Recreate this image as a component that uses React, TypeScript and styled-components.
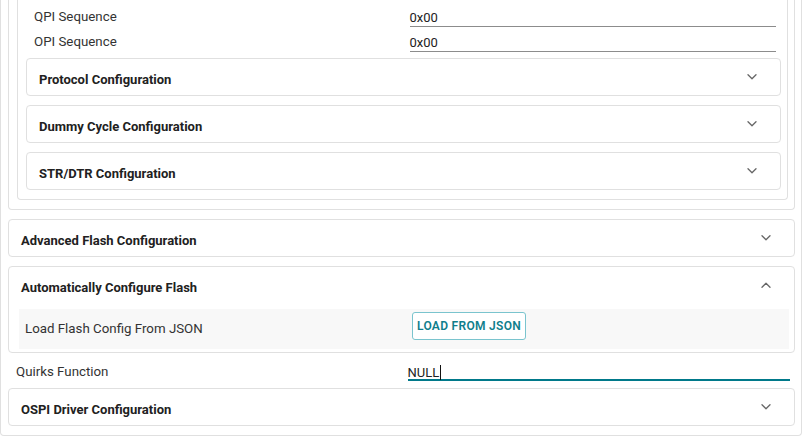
import React from "react";
import styled, { createGlobalStyle } from "styled-components";

const GlobalStyle = createGlobalStyle`
  *, *::before, *::after { box-sizing: border-box; }
  html, body { margin: 0; padding: 0; background: #ffffff; }
  body {
    width: 803px;
    height: 436px;
    overflow: hidden;
    font-family: Roboto, "Liberation Sans", Arial, sans-serif;
    color: #212121;
  }
`;

const BORDER = "#e0e0e0";

const Outer = styled.div`
  display: flex;
  flex-direction: column;
  width: 802px;
  border: 1px solid ${BORDER};
  border-top: none;
  border-radius: 0 0 4px 4px;
  padding: 0 6px 9px 7px;
`;

const Panel = styled.div<{ $padTop?: number }>`
  display: flex;
  flex-direction: column;
  border: 1px solid ${BORDER};
  border-top: none;
  border-radius: 0 0 4px 4px;
  padding: ${(p) => p.$padTop ?? 0}px 6px 9px 8px;
`;

const Card = styled.div<{ $top?: number }>`
  display: flex;
  flex-direction: column;
  margin-top: ${(p) => (p.$top ?? 9)}px;
  border: 1px solid ${BORDER};
  border-radius: 4px;
  background: #ffffff;
`;

const Header = styled.div`
  display: flex;
  align-items: center;
  justify-content: space-between;
  height: 36px;
  padding: 0 18px 0 12px;
`;

const Title = styled.span`
  margin-top: 6px;
  font-size: 13px;
  font-weight: 700;
  color: #212121;
  line-height: 16px;
`;

const IconBox = styled.span`
  display: flex;
  align-items: center;
  justify-content: center;
  width: 20px;
  height: 20px;
`;

const Body = styled.div`
  padding: 6px 5px 3px 10px;
`;

const FieldRow = styled.div<{ $height: number; $shaded?: boolean }>`
  display: grid;
  grid-template-columns: 1fr 1fr;
  align-items: center;
  height: ${(p) => p.$height}px;
  background: ${(p) => (p.$shaded ? "#f8f8f8" : "transparent")};
`;

const Label = styled.span<{ $pad?: number; $drop?: number }>`
  padding-left: ${(p) => p.$pad ?? 8}px;
  margin-top: ${(p) => p.$drop ?? 0}px;
  font-size: 13.3px;
  color: #333333;
  line-height: 16px;
`;

const Input = styled.div<{ $focused?: boolean }>`
  display: flex;
  align-items: center;
  height: 20px;
  margin: 0 5px 0 6px;
  padding-top: ${(p) => (p.$focused ? 5 : 2)}px;
  font-size: 13px;
  color: #222222;
  border-bottom: ${(p) => (p.$focused ? "2px solid #00798a" : "1px solid #8c8c8c")};
`;

const Caret = styled.span`
  display: inline-block;
  width: 1px;
  height: 15px;
  margin-left: 1px;
  background: #111111;
`;

const ButtonCell = styled.div`
  align-self: start;
  margin-top: 3px;
  padding-left: 8px;
`;

const OutlineButton = styled.button`
  height: 28px;
  padding: 0 4px;
  border: 1px solid #7ac4ce;
  border-radius: 3px;
  background: #ffffff;
  font-family: Roboto, "Liberation Sans", Arial, sans-serif;
  font-size: 12px;
  font-weight: 600;
  letter-spacing: 0.3px;
  color: #0f7e8c;
  cursor: pointer;
`;

const Chevron = ({ up }: { up?: boolean }) => (
  <svg width="10" height="6" viewBox="0 0 10 6" fill="none">
    <polyline
      points={up ? "1,5.2 5,1.2 9,5.2" : "1,0.8 5,4.8 9,0.8"}
      stroke="#666666"
      strokeWidth="1.3"
      strokeLinecap="round"
      strokeLinejoin="round"
    />
  </svg>
);

const Section = ({ title, up }: { title: string; up?: boolean }) => (
  <Header>
    <Title>{title}</Title>
    <IconBox>
      <Chevron up={up} />
    </IconBox>
  </Header>
);

const CollapsedCard = ({ title, top }: { title: string; top?: number }) => (
  <Card $top={top}>
    <Section title={title} />
  </Card>
);

export default function App() {
  return (
    <>
      <GlobalStyle />
      <Outer>
        <Panel>
          <Panel $padTop={4}>
            <FieldRow $height={25}>
              <Label>QPI Sequence</Label>
              <Input>0x00</Input>
            </FieldRow>
            <FieldRow $height={25}>
              <Label>OPI Sequence</Label>
              <Input>0x00</Input>
            </FieldRow>
            <CollapsedCard title="Protocol Configuration" top={4} />
            <CollapsedCard title="Dummy Cycle Configuration" />
            <CollapsedCard title="STR/DTR Configuration" />
          </Panel>
        </Panel>
        <CollapsedCard title="Advanced Flash Configuration" />
        <Card>
          <Section title="Automatically Configure Flash" up />
          <Body>
            <FieldRow $height={40} $shaded>
              <Label $pad={6}>Load Flash Config From JSON</Label>
              <ButtonCell>
                <OutlineButton type="button">LOAD FROM JSON</OutlineButton>
              </ButtonCell>
            </FieldRow>
          </Body>
        </Card>
        <FieldRow $height={35}>
          <Label $drop={3}>Quirks Function</Label>
          <Input $focused>
            NULL
            <Caret />
          </Input>
        </FieldRow>
        <CollapsedCard title="OSPI Driver Configuration" top={0} />
      </Outer>
    </>
  );
}
